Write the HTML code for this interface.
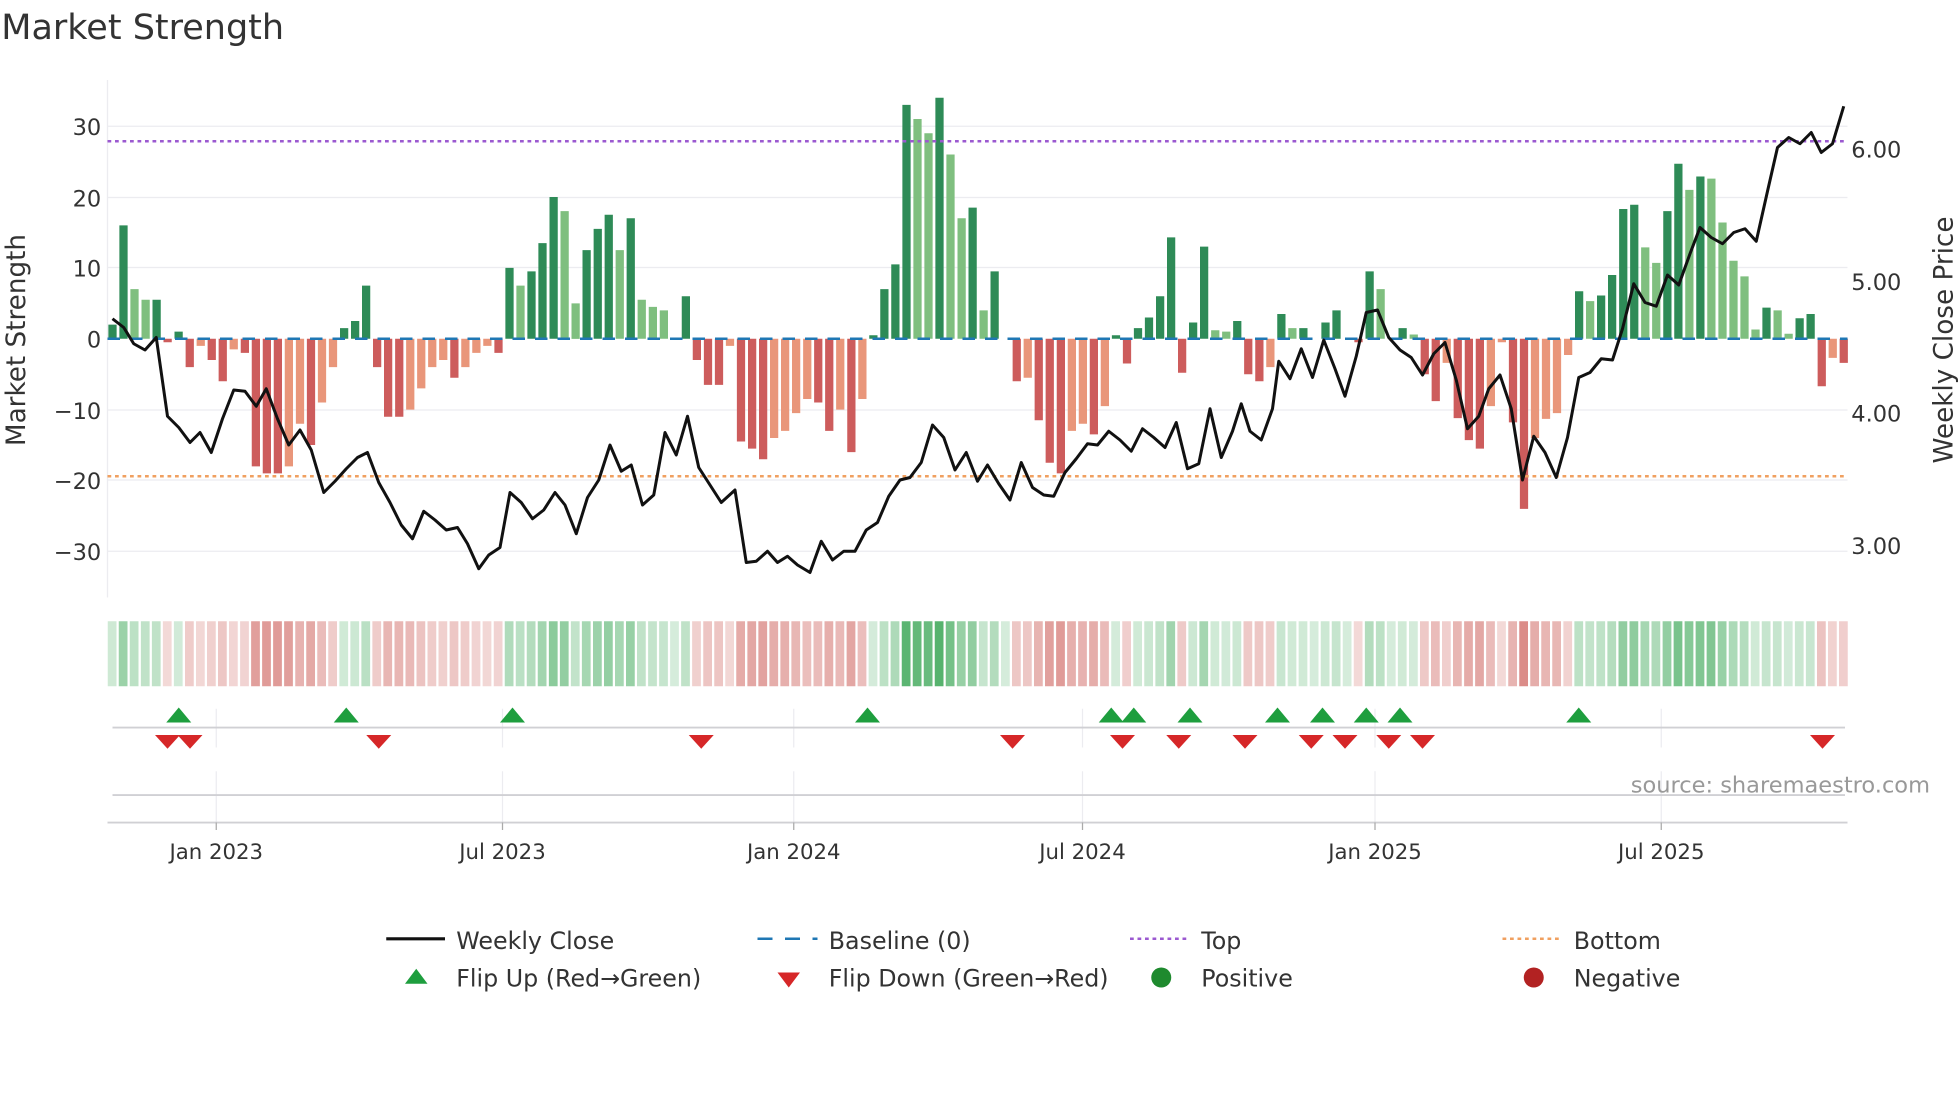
<!DOCTYPE html>
<html><head><meta charset="utf-8"><style>
html,body{margin:0;padding:0;background:#fff;width:1960px;height:1102px;overflow:hidden}
svg{display:block}
text{font-family:"DejaVu Sans","Liberation Sans",sans-serif;fill:#333}
</style></head><body>
<svg id="s" width="1960" height="1102" viewBox="0 0 1568 881.6" xmlns="http://www.w3.org/2000/svg">
<text x="1" y="31" font-size="28">Market Strength</text>
<g stroke="#ececf0" stroke-width="1">
<line x1="86" y1="101" x2="1478" y2="101"/><line x1="86" y1="158" x2="1478" y2="158"/><line x1="86" y1="214" x2="1478" y2="214"/>
<line x1="86" y1="328" x2="1478" y2="328"/><line x1="86" y1="384" x2="1478" y2="384"/><line x1="86" y1="441" x2="1478" y2="441"/>
<line x1="86" y1="64" x2="86" y2="478"/>
<line x1="173" y1="567" x2="173" y2="598"/><line x1="402" y1="567" x2="402" y2="598"/><line x1="635" y1="567" x2="635" y2="598"/><line x1="866" y1="567" x2="866" y2="598"/><line x1="1100" y1="567" x2="1100" y2="598"/><line x1="1329" y1="567" x2="1329" y2="598"/>
<line x1="173" y1="617" x2="173" y2="658"/><line x1="402" y1="617" x2="402" y2="658"/><line x1="635" y1="617" x2="635" y2="658"/><line x1="866" y1="617" x2="866" y2="658"/><line x1="1100" y1="617" x2="1100" y2="658"/><line x1="1329" y1="617" x2="1329" y2="658"/>
</g>
<g stroke="#d0d0d4" stroke-width="1.5"><line x1="90" y1="582" x2="1476" y2="582"/><line x1="90" y1="636" x2="1476" y2="636"/><line x1="86" y1="658" x2="1478" y2="658"/></g>
<g stroke="#aaa"><line x1="173" y1="658" x2="173" y2="664"/><line x1="402" y1="658" x2="402" y2="664"/><line x1="635" y1="658" x2="635" y2="664"/><line x1="866" y1="658" x2="866" y2="664"/><line x1="1100" y1="658" x2="1100" y2="664"/><line x1="1329" y1="658" x2="1329" y2="664"/></g>
<g id="bars"></g><g id="heat"></g>
<line x1="86" y1="271" x2="1478" y2="271" stroke="#1f77b4" stroke-width="2" stroke-dasharray="10,8"/>
<line x1="86" y1="113" x2="1478" y2="113" stroke="#9b59d0" stroke-width="2" stroke-dasharray="3,3"/>
<line x1="86" y1="381" x2="1478" y2="381" stroke="#f0a060" stroke-width="2" stroke-dasharray="3,3"/>
<polyline id="pl" fill="none" stroke="#111" stroke-width="2.4" stroke-linejoin="round"/>
<g id="mk"></g>
<g font-size="18" text-anchor="end"><text x="81" y="108">30</text><text x="81" y="165">20</text><text x="81" y="221">10</text><text x="81" y="278">0</text><text x="81" y="335">−10</text><text x="81" y="391">−20</text><text x="81" y="448">−30</text></g>
<g font-size="18"><text x="1481" y="126">6.00</text><text x="1481" y="232">5.00</text><text x="1481" y="337">4.00</text><text x="1481" y="443">3.00</text></g>
<text transform="translate(20,272) rotate(-90)" font-size="21" text-anchor="middle">Market Strength</text>
<text transform="translate(1562,272) rotate(-90)" font-size="21" text-anchor="middle">Weekly Close Price</text>
<g font-size="17" text-anchor="middle"><text x="173" y="687">Jan 2023</text><text x="402" y="687">Jul 2023</text><text x="635" y="687">Jan 2024</text><text x="866" y="687">Jul 2024</text><text x="1100" y="687">Jan 2025</text><text x="1329" y="687">Jul 2025</text></g>
<text x="1544" y="634" font-size="18" text-anchor="end" style="fill:#999">source: sharemaestro.com</text>
<g font-size="19">
<line x1="309" y1="751" x2="356" y2="751" stroke="#111" stroke-width="2.5"/><text x="365" y="759">Weekly Close</text>
<line x1="606" y1="751" x2="654" y2="751" stroke="#1f77b4" stroke-width="2" stroke-dasharray="12,10"/><text x="663" y="759">Baseline (0)</text>
<line x1="904" y1="751" x2="951" y2="751" stroke="#9b59d0" stroke-width="2" stroke-dasharray="3,3"/><text x="961" y="759">Top</text>
<line x1="1202" y1="751" x2="1249" y2="751" stroke="#f0a060" stroke-width="2" stroke-dasharray="3,3"/><text x="1259" y="759">Bottom</text>
<path d="M324,787 L342,787 L333,775Z" fill="#1e9e3e"/><text x="365" y="789">Flip Up (Red→Green)</text>
<path d="M622,778 L640,778 L631,790Z" fill="#d62728"/><text x="663" y="789">Flip Down (Green→Red)</text>
<circle cx="929" cy="782" r="8" fill="#1e8a2e"/><text x="961" y="789">Positive</text>
<circle cx="1227" cy="782" r="8" fill="#b22222"/><text x="1259" y="789">Negative</text>
</g>
</svg>
<script>
var v=[2,16,7,5.5,5.5,-0.5,1,-4,-1,-3,-6,-1.5,-2,-18,-19,-19,-18,-12,-15,-9,-4,1.5,2.5,7.5,-4,-11,-11,-10,-7,-4,-3,-5.5,-4,-2,-1,-2,10,7.5,9.5,13.5,20,18,5,12.5,15.5,17.5,12.5,17,5.5,4.5,4,0,6,-3,-6.5,-6.5,-1,-14.5,-15.5,-17,-14,-13,-10.5,-8.5,-9,-13,-10,-16,-8.5,0.5,7,10.5,33,31,29,34,26,17,18.5,4,9.5,0,-6,-5.5,-11.5,-17.5,-19,-13,-12,-13.5,-9.5,0.5,-3.5,1.5,3,6,14.3,-4.8,2.3,13,1.2,1,2.5,-5,-6,-4,3.5,1.5,1.5,0,2.3,4,0,-0.5,9.5,7,0,1.5,0.6,-5,-8.8,-3.4,-11.2,-14.3,-15.5,-9.5,-0.5,-11.8,-24,-14,-11.3,-10.5,-2.3,6.7,5.3,6.1,9,18.3,18.9,12.9,10.7,18,24.7,21,22.9,22.6,16.4,11,8.8,1.3,4.4,4,0.7,2.9,3.5,-6.7,-2.7,-3.4];
var n=v.length,st=(1475-90)/(n-1),x0=90,b='',h='';
for(var i=0;i<n;i++){var x=x0+st*i,y=v[i],p=i?v[i-1]:0,c;
if(y>=0)c=y>=p?'#2e8b57':'#7fbf7f';else c=y<=p?'#cd5c5c':'#e9967a';
var t=Math.min(271,271-y*5.67),hh=Math.abs(y*5.67);
b+='<rect x="'+(x-3.3).toFixed(1)+'" y="'+t.toFixed(1)+'" width="6.6" height="'+hh.toFixed(1)+'" fill="'+c+'"/>';
var a=0.25+Math.min(1,Math.abs(y)/34)*0.75;
h+='<rect x="'+(x-3.8).toFixed(1)+'" y="497" width="7" height="52" fill="'+(y>=0?'#3aa655':'#c8504a')+'" fill-opacity="'+(a*0.85).toFixed(2)+'"/>';}
document.getElementById('bars').innerHTML=b;document.getElementById('heat').innerHTML=h;
var pts="90,255 99,262 107,275 116,280 125,270 134,333 143,342 152,354 160,346 169,362 178,335 187,312 196,313 205,325 213,311 222,335 231,356 240,344 249,360 259,394 268,385 277,375 286,366 294,362 303,386 312,402 321,420 330,431 339,409 348,416 357,424 366,422 374,435 383,455 391,444 400,438 408,394 417,402 426,415 435,408 444,394 452,404 461,427 470,398 479,384 488,356 497,377 505,372 514,404 523,396 532,346 541,364 550,333 559,374 568,388 577,402 588,392 597,450 605,449 614,441 622,450 630,445 638,452 648,458 657,433 666,448 675,441 684,441 693,424 702,418 711,397 720,384 728,382 737,370 746,340 755,350 764,376 773,362 782,385 790,372 799,387 808,400 817,370 826,390 835,396 843,397 852,378 861,367 870,355 878,356 887,345 896,352 905,361 914,343 923,350 932,358 941,338 950,375 959,371 968,327 977,366 986,345 993,323 1000,345 1009,352 1018,327 1023,289 1032,303 1041,279 1050,302 1059,272 1068,295 1076,317 1085,285 1093,250 1102,248 1111,270 1120,280 1129,286 1138,300 1147,283 1156,274 1165,304 1174,343 1183,333 1191,311 1200,300 1209,327 1218,384 1227,349 1236,362 1245,382 1254,350 1263,302 1272,298 1281,287 1290,288 1298,263 1307,227 1316,242 1325,245 1334,220 1343,228 1352,203 1360,182 1369,190 1378,195 1387,186 1396,183 1405,193 1414,153 1422,118 1431,110 1440,115 1449,106 1457,122 1466,115 1475,85";
document.getElementById('pl').setAttribute('points',pts);
var up=[143,277,410,694,889,907,952,1022,1058,1093,1120,1263],dn=[134,152,303,561,810,898,943,996,1049,1076,1111,1138,1458],m='';
up.forEach(function(x){m+='<path d="M'+(x-10)+',578 L'+(x+10)+',578 L'+x+',566Z" fill="#1e9e3e"/>';});
dn.forEach(function(x){m+='<path d="M'+(x-10)+',588 L'+(x+10)+',588 L'+x+',599Z" fill="#d62728"/>';});
document.getElementById('mk').innerHTML=m;
</script>
</body></html>
